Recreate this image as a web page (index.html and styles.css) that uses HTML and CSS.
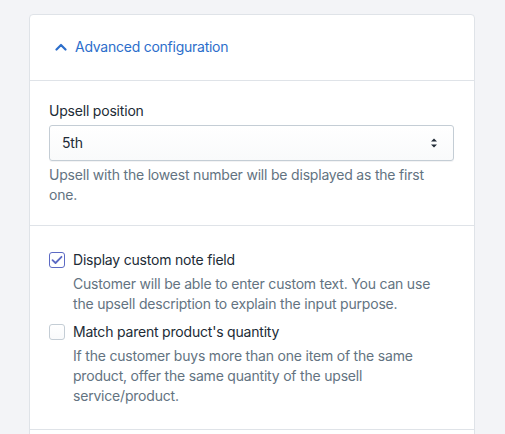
FILE: index.html
```html
<!DOCTYPE html>
<html>
<head>
<meta charset="utf-8">
<link rel="stylesheet" href="styles.css">
</head>
<body>
<div class="card">
  <div class="card-header">
    <button class="toggle">
      <svg class="chevron" width="12" height="8" viewBox="0 0 12 8"><path d="M1.5 6.5 L6 2 L10.5 6.5" fill="none" stroke="#2c6ecb" stroke-width="2.2" stroke-linecap="round" stroke-linejoin="round"/></svg>
      <span>Advanced configuration</span>
    </button>
  </div>
  <div class="section s1">
    <div class="label">Upsell position</div>
    <div class="select">
      <span>5th</span>
      <svg class="arrows" width="8" height="12" viewBox="0 0 8 12"><path d="M1 4.5 L4 1.5 L7 4.5 Z M1 7.5 L4 10.5 L7 7.5 Z" fill="#212b36"/></svg>
    </div>
    <div class="help">Upsell with the lowest number will be displayed as the first one.</div>
  </div>
  <div class="section s2">
    <div class="check-item">
      <div class="check-row">
        <span class="box checked">
          <svg width="12" height="10" viewBox="0 0 12 10"><path d="M1.5 5.2 L4.5 8 L10.5 1.8" fill="none" stroke="#5c6ac4" stroke-width="1.8" stroke-linecap="round" stroke-linejoin="round"/></svg>
        </span>
        <span class="check-label">Display custom note field</span>
      </div>
      <div class="check-help">Customer will be able to enter custom text. You can use the upsell description to explain the input purpose.</div>
    </div>
    <div class="check-item">
      <div class="check-row">
        <span class="box"></span>
        <span class="check-label">Match parent product's quantity</span>
      </div>
      <div class="check-help">If the customer buys more than one item of the same product, offer the same quantity of the upsell service/product.</div>
    </div>
  </div>
  <div class="section s3"></div>
</div>
</body>
</html>
```
FILE: styles.css
```css
html, body {
  margin: 0;
  padding: 0;
  background: #f3f4f7;
  height: 434px;
  overflow: hidden;
}
body {
  font-family: Inter, "Noto Sans", sans-serif;
  font-size: 14px;
  line-height: 20px;
  letter-spacing: -0.2px;
  color: #212b36;
  padding: 14px 30px 0 29px;
}
.card {
  background: #fff;
  border: 1px solid #dfe3e8;
  border-radius: 4px;
  width: 444px;
}
.card-header {
  height: 65px;
  display: flex;
  align-items: center;
  padding-left: 25px;
  border-bottom: 1px solid #dfe3e8;
}
.toggle {
  display: flex;
  align-items: center;
  gap: 8px;
  background: none;
  border: 0;
  padding: 0;
  font: inherit;
  letter-spacing: -0.25px;
  color: #2c6ecb;
  cursor: pointer;
  margin-top: -2px;
}
.chevron { display: block; }
.section {
  padding: 20px 20px 20px 19px;
  border-bottom: 1px solid #dfe3e8;
}
.label { margin-bottom: 4px; }
.select {
  height: 34px;
  border: 1px solid #c4cdd5;
  border-radius: 3px;
  background: linear-gradient(#fff, #f9fafb);
  box-shadow: 0 1px 0 rgba(22,29,37,0.05);
  display: flex;
  align-items: center;
  justify-content: space-between;
  padding: 0 15px 0 12px;
}
.arrows { display: block; }
.help {
  margin-top: 4px;
  color: #637381;
}
.s2 {
  padding-top: 24px;
  padding-bottom: 23px;
  display: flex;
  flex-direction: column;
  gap: 8px;
}
.check-row {
  display: flex;
  align-items: center;
  gap: 8px;
  height: 20px;
}
.box {
  width: 14px;
  height: 14px;
  border: 1px solid #c4cdd5;
  border-radius: 3px;
  background: linear-gradient(#fff, #f9fafb);
  display: flex;
  align-items: center;
  justify-content: center;
  margin-top: -1px;
}
.box.checked {
  border-color: #5c6ac4;
  background: #fff;
}
.box svg { display: block; }
.check-label { color: #212b36; }
.check-help {
  margin-top: 4px;
  padding-left: 24px;
  color: #637381;
}
.s3 { height: 100px; border-bottom: 0; }
```
